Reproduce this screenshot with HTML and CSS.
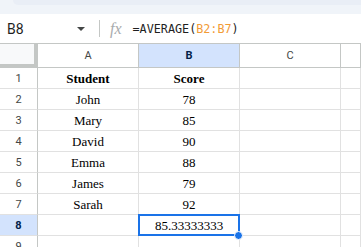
FILE: index.html
```html
<!DOCTYPE html>
<html lang="en">
<head>
    <meta charset="UTF-8">
    <title>Scores</title>
    <link rel="stylesheet" href="styles.css">
</head>
<body>
    <div class="topbar"><div class="toolbar"></div></div>

    <div class="formula-bar">
        <div class="name-box">
            <span class="cell-ref">B8</span>
            <span class="caret"></span>
        </div>
        <div class="divider"></div>
        <span class="fx">fx</span>
        <span class="formula">=AVERAGE(<span class="range">B2:B7</span>)</span>
    </div>

    <div class="grid">
        <div class="corner"></div>
        <div class="col-head">A</div>
        <div class="col-head active">B</div>
        <div class="col-head">C</div>
        <div class="col-head"></div>

        <div class="row-head">1</div>
        <div class="cell bold">Student</div>
        <div class="cell bold">Score</div>
        <div class="cell"></div>
        <div class="cell"></div>

        <div class="row-head">2</div>
        <div class="cell">John</div>
        <div class="cell">78</div>
        <div class="cell"></div>
        <div class="cell"></div>

        <div class="row-head">3</div>
        <div class="cell">Mary</div>
        <div class="cell">85</div>
        <div class="cell"></div>
        <div class="cell"></div>

        <div class="row-head">4</div>
        <div class="cell">David</div>
        <div class="cell">90</div>
        <div class="cell"></div>
        <div class="cell"></div>

        <div class="row-head">5</div>
        <div class="cell">Emma</div>
        <div class="cell">88</div>
        <div class="cell"></div>
        <div class="cell"></div>

        <div class="row-head">6</div>
        <div class="cell">James</div>
        <div class="cell">79</div>
        <div class="cell"></div>
        <div class="cell"></div>

        <div class="row-head">7</div>
        <div class="cell">Sarah</div>
        <div class="cell">92</div>
        <div class="cell"></div>
        <div class="cell"></div>

        <div class="row-head active">8</div>
        <div class="cell"></div>
        <div class="cell selected">85.33333333<span class="handle"></span></div>
        <div class="cell"></div>
        <div class="cell"></div>

        <div class="row-head">9</div>
        <div class="cell"></div>
        <div class="cell"></div>
        <div class="cell"></div>
        <div class="cell"></div>
    </div>
</body>
</html>
```

FILE: styles.css
```css
body {
    margin: 0;
    padding: 0;
    background-color: #ffffff;
    font-family: Roboto, Arial, sans-serif;
    overflow: hidden;
}

/* strip of the toolbar above the formula bar */
.topbar {
    height: 14px;
    background-color: #f0f4f9;
}

.toolbar {
    height: 5px;
    margin-left: 13px;
    background-color: #e9eef6;
    border-bottom-left-radius: 6px;
}

.formula-bar {
    display: flex;
    align-items: center;
    height: 29px;
    border-bottom: 1px solid #c4c7c5;
}

.name-box {
    display: flex;
    align-items: center;
    justify-content: space-between;
    box-sizing: border-box;
    width: 99px;
    padding: 0 14px 0 7px;
}

.cell-ref {
    font-size: 14px;
    color: #1f1f1f;
}

.caret {
    width: 0;
    height: 0;
    border-left: 4px solid transparent;
    border-right: 4px solid transparent;
    border-top: 4px solid #444746;
}

.divider {
    width: 1px;
    height: 17px;
    background-color: #c4c7c5;
}

.fx {
    margin-left: 10px;
    font-family: "Liberation Serif", serif;
    font-style: italic;
    font-size: 16px;
    color: #a8abad;
}

.formula {
    margin-left: 11px;
    font-family: "DejaVu Sans Mono", monospace;
    font-size: 11.75px;
    color: #1f1f1f;
}

.range {
    color: #f29b36;
}

.grid {
    display: grid;
    grid-template-columns: 38px 101px 101px 101px 1fr;
    grid-template-rows: 24px;
    grid-auto-rows: 21px;
}

.corner {
    box-sizing: border-box;
    background-color: #f8f9fa;
    border-right: 4px solid #c4c7c5;
    border-bottom: 4px solid #c4c7c5;
}

.col-head,
.row-head,
.cell {
    box-sizing: border-box;
    display: flex;
    align-items: center;
    justify-content: center;
}

.col-head {
    font-size: 11px;
    color: #444746;
    border-right: 1px solid #c4c7c5;
    border-bottom: 1px solid #c4c7c5;
}

.row-head {
    font-size: 11px;
    color: #444746;
    border-right: 1px solid #c4c7c5;
    border-bottom: 1px solid #e1e1e1;
}

.col-head.active,
.row-head.active {
    background-color: #d3e3fd;
    color: #041e49;
    font-weight: bold;
}

.cell {
    padding-top: 2px;
    font-family: "Liberation Serif", serif;
    font-size: 13px;
    color: #000000;
    border-right: 1px solid #e1e1e1;
    border-bottom: 1px solid #e1e1e1;
}

.bold {
    font-weight: bold;
}

.selected {
    position: relative;
}

.selected::after {
    content: "";
    position: absolute;
    left: -1px;
    top: -1px;
    right: -1px;
    bottom: -1px;
    border: 2px solid #1a73e8;
}

.handle {
    position: absolute;
    right: -4px;
    bottom: -5px;
    width: 7px;
    height: 7px;
    border-radius: 50%;
    background-color: #1a73e8;
    border: 1px solid #ffffff;
    z-index: 1;
}
```
